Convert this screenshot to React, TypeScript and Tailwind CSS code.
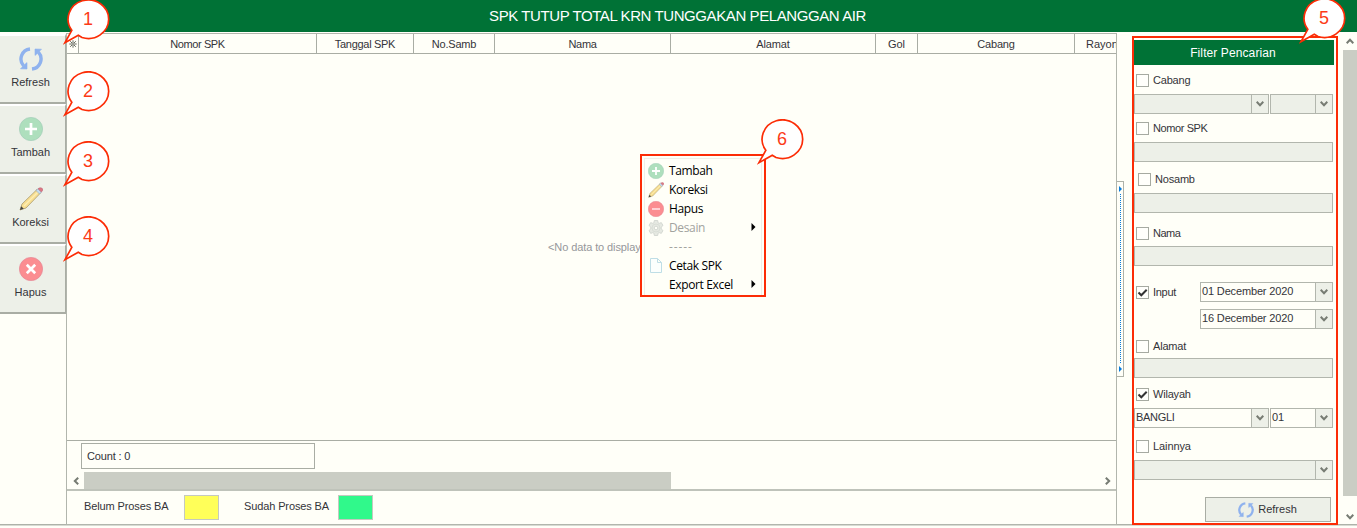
import type { ReactNode } from 'react';

function RefreshIcon({ className }: { className: string }) {
  return (
    <svg viewBox="0 0 24 24" className={`shrink-0 ${className}`} fill="none" stroke="#8fb2ee" strokeWidth="3.4">
      <path d="M11 2A10.100 10.100 0 0 0 4.600 18.800" />
      <path d="M13 22A10.100 10.100 0 0 0 19.400 5.200" />
      <path d="M1.500 21.800L8 22L8 15.600L6 17.200L3.300 20z" fill="#8fb2ee" stroke="#8fb2ee" strokeWidth=".6" />
      <path d="M22.500 2.200L16 2L16 8.400L18 6.800L20.700 4z" fill="#8fb2ee" stroke="#8fb2ee" strokeWidth=".6" />
    </svg>
  );
}

function CircleIcon({ kind, className }: { kind: 'plus' | 'cross' | 'minus'; className: string }) {
  const paths = { plus: 'M12 6v12M6 12h12', cross: 'M7.8 7.8l8.4 8.4M16.2 7.8l-8.4 8.4', minus: 'M6 12h12' };
  return (
    <svg viewBox="0 0 24 24" className={`shrink-0 ${className}`}>
      <circle cx="12" cy="12" r="11.6" fill={kind === 'plus' ? '#aedfbd' : '#fb8d91'} stroke={kind === 'plus' ? '#a3cdb9' : '#e58796'} strokeWidth=".7" />
      <path d={paths[kind]} stroke={kind === 'minus' ? '#ffd9dc' : '#fff'} strokeWidth="2.7" />
    </svg>
  );
}

function PencilIcon({ className }: { className: string }) {
  return (
    <svg viewBox="0 0 24 24" className={`shrink-0 ${className}`}>
      <path d="M1 23L3 17L18 2.5L21.5 6L7 21z" fill="#f8df91" stroke="#a99a70" strokeWidth=".8" />
      <path d="M5 19L19.5 4.5" stroke="#fdeeb5" strokeWidth="1.2" />
      <path d="M17 3.5L19 1.7L22.4 5L20.5 7z" fill="#c4dcf0" stroke="#8fa4b8" strokeWidth=".6" />
      <path d="M19 1.7Q21 0 23 1.2T22.4 5z" fill="#df7784" stroke="#b96c7a" strokeWidth=".6" />
      <path d="M1 23L2.2 19.3L4.8 21.8z" fill="#444" />
    </svg>
  );
}

function GearIcon() {
  return (
    <svg viewBox="0 0 16 16" className="h-4 w-4" fill="#e6e9e2" stroke="#cdd2cb" strokeWidth=".8">
      <path d="M6.300 .5h3.400l.4 2.300 1 .6 2.200-.8 1.700 2.900-1.800 1.500v2l1.800 1.500-1.700 2.900-2.200-.8-1 .6-.4 2.300H6.300l-.4-2.300-1-.6-2.200.8L1 10.500 2.800 9V7L1 5.500l1.700-2.900 2.200.8 1-.6z" />
      <circle cx="8" cy="8" r="4" fill="none" strokeWidth=".5" />
      <circle cx="8" cy="8" r="1.800" fill="#fffff8" />
    </svg>
  );
}

function PageIcon() {
  return (
    <svg viewBox="0 0 16 16" className="h-4 w-4" fill="#fcfffd" stroke="#bfdee6">
      <path d="M2.500 .5h7l4 4v10h-11zM9.500 .5v4h4" />
    </svg>
  );
}

function Chevron({ className = '' }: { className?: string }) {
  return (
    <svg viewBox="0 0 8 6" className={`h-[6px] w-[8px] ${className}`} fill="none" stroke="#777c73" strokeWidth="2">
      <path d="M.7 .8L4 4.200L7.300 .8" />
    </svg>
  );
}

function SplitArrow() {
  return (
    <svg viewBox="0 0 3 6" className="h-[6px] w-[3px] shrink-0" fill="#087bdc">
      <path d="M0 0L3 3L0 6z" />
    </svg>
  );
}

function Callout({ n, className }: { n: number; className: string }) {
  return (
    <div className={`absolute z-20 h-[46px] w-[48px] ${className}`}>
      <svg viewBox="0 0 48 46" className="absolute h-full w-full">
        <path d="M8.800 31.300A20.300 19.300 0 1 1 19 38.500L15.300 36.200L2 43.700Z" fill="#fff" stroke="#fc2c06" strokeWidth="1.700" />
      </svg>
      <span className="absolute top-[10px] left-[19px] w-[12px] text-center text-[18px] leading-[20px] text-[#fc3a18]">{n}</span>
    </div>
  );
}

function SideButton({ label, children }: { label: string; children: ReactNode }) {
  return (
    <button className="flex h-[70px] w-[66px] flex-col items-center border-t-2 border-r border-b-2 border-t-white border-r-[#a9ada4] border-b-[#a9ada4] bg-[#edf0e8] pt-[11px] pr-[4px]">
      {children}
      <span className="mt-[5px] text-[11px] leading-[13px]">{label}</span>
    </button>
  );
}

function Field({ value = '', active = false, combo = false, className }: { value?: string; active?: boolean; combo?: boolean; className: string }) {
  return (
    <div className={`flex h-[20px] shrink-0 border border-[#b2b6ad] ${active ? 'bg-[#fffff8]' : 'bg-[#edf0e8]'} ${className}`}>
      <span className="flex-1 pl-[1px] leading-[17px]">{value}</span>
      {combo && (
        <span className="flex w-[17px] items-center justify-center border-l border-[#b2b6ad] bg-[#edf0e8]">
          <Chevron />
        </span>
      )}
    </div>
  );
}

function Check({ label, on = false, className = '' }: { label: string; on?: boolean; className?: string }) {
  return (
    <label className={`flex h-[13px] items-center pl-[2px] ${className}`}>
      <span className="flex h-[13px] w-[13px] items-center justify-center border border-[#a6aaa1] bg-[#fffffb]">
        {on && (
          <svg viewBox="0 0 11 11" className="h-[11px] w-[11px]" fill="none" stroke="#333" strokeWidth="2">
            <path d="M1.500 5.500L4.300 8.300L9.700 2.800" />
          </svg>
        )}
      </span>
      <span className="ml-[4px] leading-[13px]">{label}</span>
    </label>
  );
}

function MenuItem({ label, icon, muted = false, arrow = false }: { label: string; icon?: ReactNode; muted?: boolean; arrow?: boolean }) {
  return (
    <div className={`flex h-[19px] items-center ${muted ? 'text-[#a2a39f]' : 'text-black'}`}>
      <span className="flex w-[27px] shrink-0 pl-[6px]">{icon}</span>
      <span className="flex-1 whitespace-nowrap">{label}</span>
      {arrow && (
        <svg viewBox="0 0 5 8" className="mr-[5px] mb-[2px] h-[8px] w-[5px]">
          <path d="M.5 0L4.500 4L.5 8z" fill="#000" />
        </svg>
      )}
    </div>
  );
}

const columns = [
  ['Nomor SPK', 'w-[238px] tracking-[-0.4px]'],
  ['Tanggal SPK', 'w-[97px] tracking-[-0.3px]'],
  ['No.Samb', 'w-[81px] tracking-[-0.2px]'],
  ['Nama', 'w-[176px] tracking-[-0.3px]'],
  ['Alamat', 'w-[205px] tracking-[-0.1px]'],
  ['Gol', 'w-[42px]'],
  ['Cabang', 'w-[157px] tracking-[-0.2px]'],
];

export default function App() {
  return (
    <div className="relative flex h-[528px] w-[1357px] flex-col overflow-hidden bg-[#fffff8] font-['Liberation_Sans',Arial,sans-serif] text-[11px] text-[#343439]">
      <header className="h-[32px] shrink-0 bg-[#007236] pr-[2px] text-center text-[15px] leading-[32px] text-white">
        <span className="tracking-[-0.41px]">SPK TUTUP TOTAL KRN TUNGGAKAN PELANGGAN AIR</span>
      </header>

      <div className="flex h-[493px] shrink-0 border-b border-[#aeb2a9]">
        <aside className="w-[66px] pt-[2px]">
          <SideButton label="Refresh"><RefreshIcon className="h-6 w-6" /></SideButton>
          <SideButton label="Tambah"><CircleIcon kind="plus" className="h-6 w-6" /></SideButton>
          <SideButton label="Koreksi"><PencilIcon className="h-6 w-6" /></SideButton>
          <SideButton label="Hapus"><CircleIcon kind="cross" className="h-6 w-6" /></SideButton>
        </aside>

        <main className="mt-[1px] flex h-[492px] w-[1051px] flex-col border border-[#b2b6ad]">
          <div className="flex h-[20px] shrink-0 overflow-hidden border-b border-[#a9ada4] text-center leading-[20px]">
            <span className="flex w-[12px] shrink-0 items-center justify-center border-r border-[#a9ada4]">
              <svg viewBox="0 0 8 8" className="h-[8px] w-[8px]" stroke="#55594f" strokeWidth=".9">
                <path d="M4 .3v3M4 4.700v3M.3 4h3M4.700 4h3M1.200 1.200l2.300 2.300M4.500 4.500l2.300 2.300M6.800 1.200L4.500 3.500M3.500 4.500L1.200 6.800" />
              </svg>
            </span>
            {columns.map(([name, width]) => (
              <span key={name} className={`shrink-0 border-r border-[#a9ada4] ${width}`}>{name}</span>
            ))}
            <span className="shrink-0 pl-[11px]">Rayon</span>
          </div>
          <div className="flex h-[386px] shrink-0 items-center justify-center pl-[12px] tracking-[-0.1px] text-[#96979b]">
            &lt;No data to display&gt;
          </div>
          <div className="h-[49px] shrink-0 border-t border-[#a9ada4]">
            <div className="mt-[2px] ml-[14px] h-[26px] w-[234px] border border-[#a9ada4] pl-[5px] leading-[25px] tracking-[-0.15px]">Count : 0</div>
            <div className="mt-[3px] flex h-[17px] items-center">
              <span className="flex w-[17px] justify-center"><Chevron className="rotate-90" /></span>
              <span className="h-[17px] w-[587px] bg-[#cacdc4]" />
              <span className="ml-auto flex w-[17px] justify-center"><Chevron className="-rotate-90" /></span>
            </div>
          </div>
          <div className="flex flex-1 border-t-2 border-[#bfc3ba] pt-[4px] leading-[23px] tracking-[-0.12px]">
            <span className="ml-[17px] w-[100px]">Belum Proses BA</span>
            <span className="h-[25px] w-[35px] border border-[#c5c9c0] bg-[#ffff59]" />
            <span className="ml-[25px] w-[94px]">Sudah Proses BA</span>
            <span className="h-[25px] w-[35px] border border-[#c5c9c0] bg-[#30f98b]" />
          </div>
        </main>

        <div className="mt-[149px] flex h-[196px] w-[7px] flex-col items-start justify-between border border-l-0 border-[#aeb2a9] py-[4px] pl-[2px]">
          <SplitArrow />
          <span className="ml-[1px] h-[170px] w-[1px] bg-[repeating-linear-gradient(to_bottom,#087bdc_0px,#087bdc_1px,transparent_1px,transparent_2px)]" />
          <SplitArrow />
        </div>

        <section className="mt-[4px] ml-[8px] h-[489px] w-[206px] shrink-0 border-2 border-[#fc2c06] pt-[2px]">
          <h2 className="h-[25px] w-[200px] bg-[#007236] pr-[2px] text-center text-[12px] leading-[26px] tracking-[0.1px] text-white">Filter Pencarian</h2>
          <Check label="Cabang" className="mt-[9px] tracking-[-0.2px]" />
          <div className="mt-[7px] flex gap-[1px]">
            <Field combo className="w-[135px]" />
            <Field combo className="w-[63px]" />
          </div>
          <Check label="Nomor SPK" className="mt-[8px] tracking-[-0.4px]" />
          <Field className="mt-[7px] w-[199px]" />
          <Check label="Nosamb" className="mt-[11px] ml-[2px] tracking-[-0.2px]" />
          <Field className="mt-[7px] w-[199px]" />
          <Check label="Nama" className="mt-[14px] tracking-[-0.5px]" />
          <Field className="mt-[6px] w-[199px]" />
          <div className="mt-[16px] flex w-[199px] justify-between">
            <Check label="Input" on className="mt-[4px] tracking-[-0.3px]" />
            <div className="flex flex-col gap-[7px] tracking-[-0.15px]">
              <Field combo active value="01 December 2020" className="w-[133px]" />
              <Field combo active value="16 December 2020" className="w-[133px]" />
            </div>
          </div>
          <Check label="Alamat" className="mt-[11px] tracking-[-0.2px]" />
          <Field className="mt-[5px] w-[199px]" />
          <Check label="Wilayah" on className="mt-[10px] tracking-[-0.2px]" />
          <div className="mt-[7px] flex gap-[1px]">
            <Field combo active value="BANGLI" className="w-[135px] tracking-[-0.3px]" />
            <Field combo active value="01" className="w-[63px]" />
          </div>
          <Check label="Lainnya" className="mt-[12px] tracking-[-0.1px]" />
          <Field combo className="mt-[7px] w-[199px]" />
          <button className="mt-[17px] ml-[71px] flex h-[25px] w-[126px] items-center justify-center gap-[4px] border border-[#a9ada4] bg-[#edf0e8] pr-[1px]">
            <RefreshIcon className="h-4 w-4" />Refresh
          </button>
        </section>

        <div className="ml-auto flex w-[14px] flex-col items-center">
          <span className="flex h-[18px] items-center"><Chevron className="rotate-180" /></span>
          <span className="h-[446px] w-[14px] bg-[#cacdc4]" />
          <span className="flex flex-1 items-center pt-[13px]"><Chevron /></span>
        </div>
      </div>
      <div className="h-[1px] bg-[#d8dbd3]" />

      <div className="absolute top-[154px] left-[640px] z-10 h-[143px] w-[126px] border-2 border-[#fc2c06] bg-[#fffff8] p-[2px] pb-0 font-['Open_Sans','Noto_Sans',sans-serif] text-[12px]">
        <div className="h-full border border-b-0 border-[#eef0e8] pt-[2px] tracking-[-0.36px]">
          <div className="-ml-[3px]">
            <MenuItem label="Tambah" icon={<CircleIcon kind="plus" className="h-4 w-4" />} />
            <MenuItem label="Koreksi" icon={<PencilIcon className="h-4 w-4" />} />
            <MenuItem label="Hapus" icon={<CircleIcon kind="minus" className="h-4 w-4" />} />
            <MenuItem label="Desain" icon={<GearIcon />} muted arrow />
            <div className="tracking-[0.9px]"><MenuItem label="-----" muted /></div>
            <MenuItem label="Cetak SPK" icon={<PageIcon />} />
            <MenuItem label="Export Excel" arrow />
          </div>
        </div>
      </div>

      <Callout n={1} className="top-[-1px] left-[63px]" />
      <Callout n={2} className="top-[71px] left-[63px]" />
      <Callout n={3} className="top-[141px] left-[63px]" />
      <Callout n={4} className="top-[216px] left-[63px]" />
      <Callout n={5} className="top-[-2px] left-[1299px]" />
      <Callout n={6} className="top-[119px] left-[757px]" />
    </div>
  );
}
